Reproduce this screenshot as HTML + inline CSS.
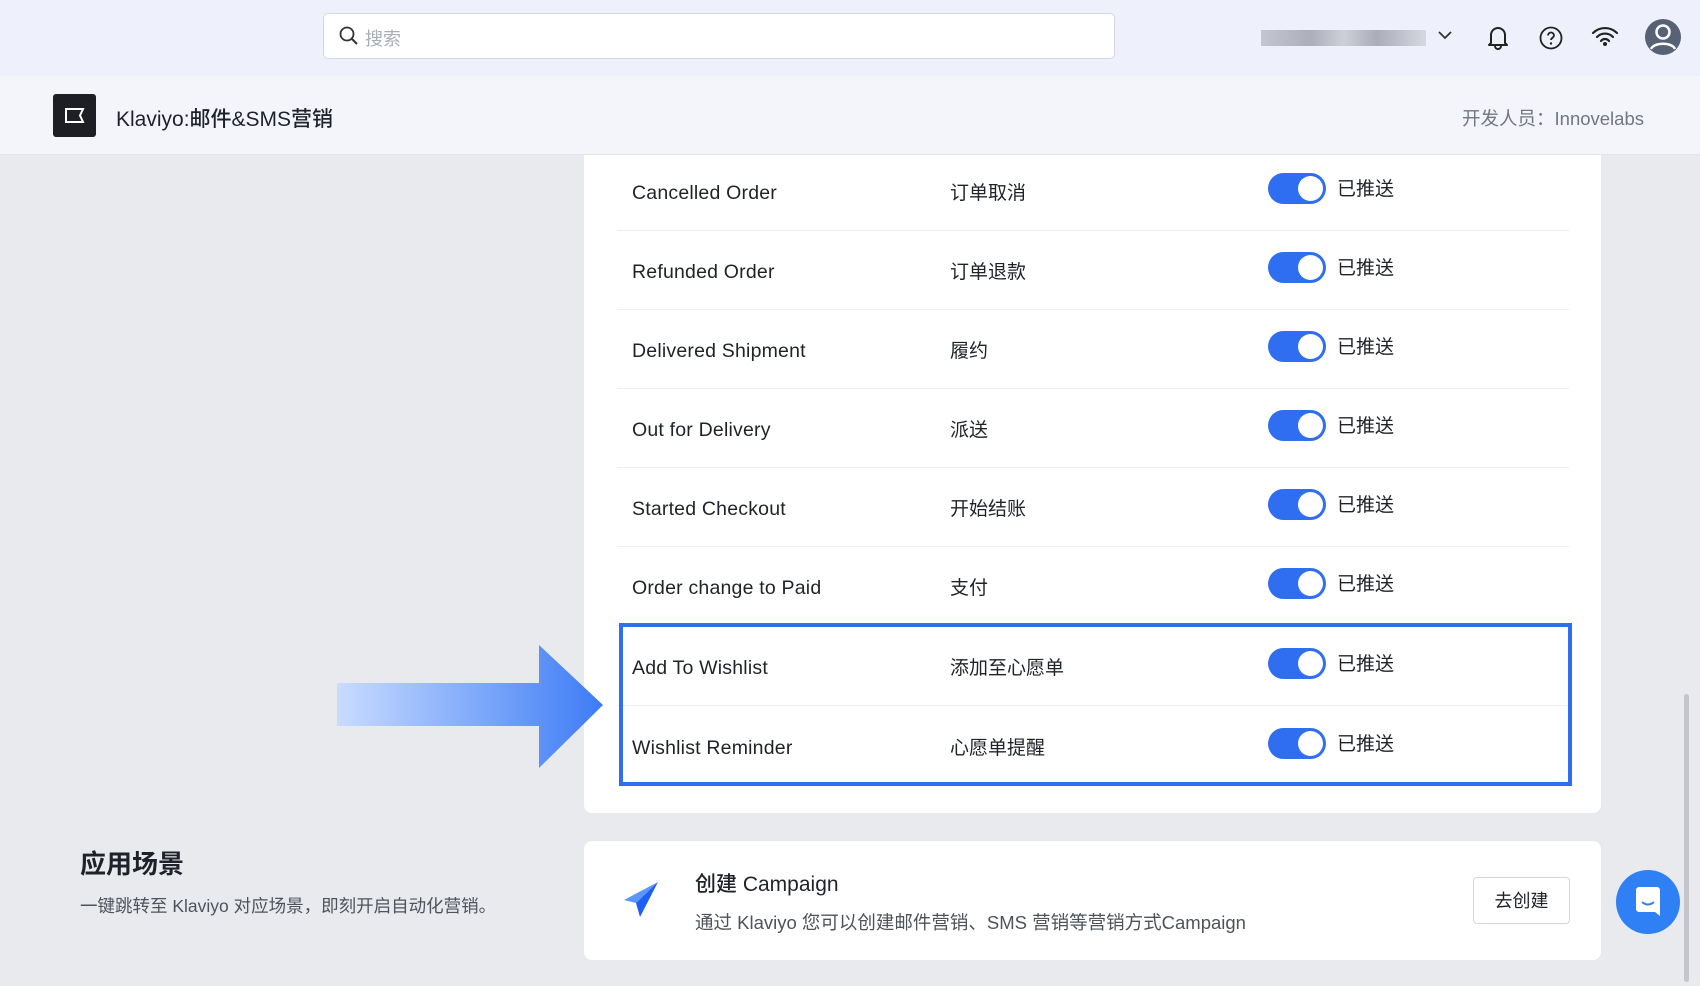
<!DOCTYPE html>
<html><head><meta charset="utf-8"><style>
*{margin:0;padding:0;box-sizing:border-box}
body{width:1700px;height:986px;overflow:hidden;background:#e8eaee;font-family:"Liberation Sans","Noto Sans CJK SC",sans-serif;color:#1f2329;position:relative}
.abs{position:absolute}
.top{left:0;top:0;width:1700px;height:76px;background:#eef0fb}
.search{left:323px;top:13px;width:792px;height:46px;background:#fff;border:1px solid #d4d7de;border-radius:5px}
.hdr{left:0;top:76px;width:1700px;height:79px;background:#f4f5fa;border-bottom:1px solid #e2e4ea}
.card{left:584px;top:155px;width:1017px;height:658px;background:#fff;border-radius:0 0 8px 8px}
.row{position:absolute;left:33px;width:952px;height:79px;border-bottom:1px solid #eceef1;font-size:19.5px}
.row .a{position:absolute;left:15px;top:2px;line-height:79px;color:#1f2329;letter-spacing:.2px}
.row .b{position:absolute;left:333px;top:2px;line-height:79px;font-size:19px}
.tg{position:absolute;left:651px;top:21px;width:58px;height:31px;border-radius:16px;background:#2f6ef0}
.tg:after{content:"";position:absolute;right:3px;top:3px;width:25px;height:25px;border-radius:50%;background:#fff}
.row .c{position:absolute;left:720px;top:1px;line-height:73px;font-size:19px}
</style></head><body>
<div class="abs top"></div>
<div class="abs search">
<svg class="abs" style="left:15px;top:12px" width="20" height="20" viewBox="0 0 20 20"><circle cx="8" cy="8" r="6.5" fill="none" stroke="#333" stroke-width="1.8"/><path d="M13 13l5 5" stroke="#333" stroke-width="2"/></svg>
<span class="abs" style="left:41px;top:11px;font-size:18px;color:#a9adb5">搜索</span></div>
<div class="abs" style="left:1261px;top:30px;width:165px;height:16px;background:linear-gradient(90deg,#b9bbc6,#9c9eaa 30%,#c5c7d0 50%,#9a9caa 70%,#cfd1da);opacity:.8"></div>
<svg class="abs" style="left:1437px;top:29px" width="16" height="12"><path d="M2 3l6 6 6-6" fill="none" stroke="#333" stroke-width="1.8"/></svg>
<svg class="abs" style="left:1486px;top:24px" width="24" height="26" viewBox="0 0 24 26"><path d="M5 19V11a7 7 0 0114 0v8l2 2H3z" fill="none" stroke="#222" stroke-width="2" stroke-linejoin="round"/><path d="M9 22a3 3 0 006 0" fill="none" stroke="#222" stroke-width="2"/></svg>
<svg class="abs" style="left:1539px;top:26px" width="24" height="24"><circle cx="12" cy="12" r="10.5" fill="none" stroke="#222" stroke-width="1.8"/><path d="M9 9.5a3 3 0 116 0c0 2-3 2.5-3 4.5" fill="none" stroke="#222" stroke-width="1.8"/><circle cx="12" cy="17.5" r="1.2" fill="#222"/></svg>
<svg class="abs" style="left:1591px;top:25px" width="28" height="22"><path d="M2 8a17 17 0 0124 0M6 12a11 11 0 0116 0M10 16a5 5 0 018 0" fill="none" stroke="#222" stroke-width="2.2" stroke-linecap="round"/><circle cx="14" cy="19" r="2" fill="#222"/></svg>
<svg class="abs" style="left:1644px;top:18px" width="38" height="38" viewBox="0 0 38 38"><circle cx="19" cy="19" r="18" fill="#586277"/><circle cx="19" cy="14" r="6.5" fill="none" stroke="#fff" stroke-width="2.5"/><path d="M7 31c3-7 21-7 24 0" fill="none" stroke="#fff" stroke-width="2.5"/></svg>

<div class="abs hdr"></div>
<div class="abs" style="left:53px;top:94px;width:43px;height:43px;background:#1d1f24;border-radius:3px">
<svg class="abs" style="left:12px;top:14px" width="20" height="15"><path d="M1 1h17l-3 6.5 3 6.5H1z" fill="none" stroke="#fff" stroke-width="2"/></svg></div>
<div class="abs" style="left:116px;top:103px;font-size:21px;font-weight:500">Klaviyo:邮件&amp;SMS营销</div>
<div class="abs" style="left:1424px;top:105px;width:220px;text-align:right;font-size:18.5px;color:#72767e">开发人员：Innovelabs</div>

<div class="abs card">
<div class="row" style="top:-3px"><span class="a">Cancelled Order</span><span class="b">订单取消</span><div class="tg"></div><span class="c">已推送</span></div>
<div class="row" style="top:76px"><span class="a">Refunded Order</span><span class="b">订单退款</span><div class="tg"></div><span class="c">已推送</span></div>
<div class="row" style="top:155px"><span class="a">Delivered Shipment</span><span class="b">履约</span><div class="tg"></div><span class="c">已推送</span></div>
<div class="row" style="top:234px"><span class="a">Out for Delivery</span><span class="b">派送</span><div class="tg"></div><span class="c">已推送</span></div>
<div class="row" style="top:313px"><span class="a">Started Checkout</span><span class="b">开始结账</span><div class="tg"></div><span class="c">已推送</span></div>
<div class="row" style="top:392px"><span class="a">Order change to Paid</span><span class="b">支付</span><div class="tg"></div><span class="c">已推送</span></div>
<div class="row" style="top:472px"><span class="a">Add To Wishlist</span><span class="b">添加至心愿单</span><div class="tg"></div><span class="c">已推送</span></div>
<div class="row" style="top:552px;border-bottom:none"><span class="a">Wishlist Reminder</span><span class="b">心愿单提醒</span><div class="tg"></div><span class="c">已推送</span></div>
</div>
<div class="abs" style="left:619px;top:623px;width:953px;height:163px;border:4px solid #2f6ef0"></div>

<svg class="abs" style="left:330px;top:640px" width="280" height="130"><defs><linearGradient id="g" x1="0" x2="1"><stop offset="0" stop-color="#c9dcff"/><stop offset="1" stop-color="#3d7bf5"/></linearGradient></defs><path d="M7 43H209V5L273 65 209 128V86H7z" fill="url(#g)"/></svg>

<div class="abs" style="left:80px;top:844px;font-size:26px;font-weight:bold">应用场景</div>
<div class="abs" style="left:80px;top:893px;font-size:17.5px;color:#4e535b">一键跳转至 Klaviyo 对应场景，即刻开启自动化营销。</div>

<div class="abs" style="left:584px;top:841px;width:1017px;height:119px;background:#fff;border-radius:8px"></div>
<svg class="abs" style="left:622px;top:880px" width="38" height="38" viewBox="0 0 38 38"><path d="M36 2L2 20l12 3z" fill="#5b95ff"/><path d="M36 2L14 23l4 14z" fill="#1e5ef0"/></svg>
<div class="abs" style="left:695px;top:868px;font-size:21px;font-weight:500">创建 Campaign</div>
<div class="abs" style="left:695px;top:909px;font-size:18.5px;color:#4e535b">通过 Klaviyo 您可以创建邮件营销、SMS 营销等营销方式Campaign</div>
<div class="abs" style="left:1473px;top:877px;width:97px;height:47px;border:1px solid #d4d7de;border-radius:4px;background:#fff;text-align:center;line-height:47px;font-size:18px">去创建</div>

<div class="abs" style="left:1616px;top:870px;width:64px;height:64px;border-radius:50%;background:#2f7ff5"></div>
<svg class="abs" style="left:1633px;top:886px" width="30" height="32"><path d="M3 4a3 3 0 013-3h18a3 3 0 013 3v26l-5-4H6a3 3 0 01-3-3z" fill="#fff"/><path d="M9 16q6 5 12 0" fill="none" stroke="#2f7ff5" stroke-width="2"/></svg>
<div class="abs" style="left:1684px;top:694px;width:5px;height:288px;background:#c4c6cb;border-radius:3px"></div>
</body></html>
